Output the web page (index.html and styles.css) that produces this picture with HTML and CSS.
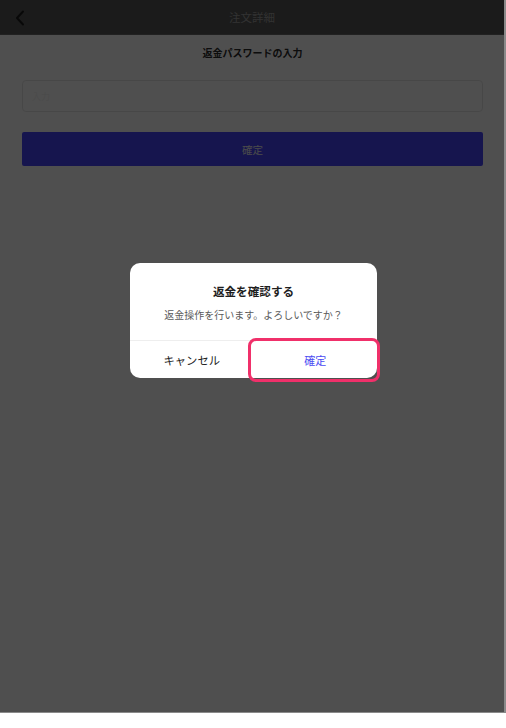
FILE: index.html
```html
<!DOCTYPE html>
<html lang="ja">
<head>
<meta charset="utf-8">
<title>注文詳細</title>
<link rel="stylesheet" href="styles.css">
</head>
<body>
<div class="screen">
  <header class="topbar">
    <span class="back">
      <svg width="10" height="16" viewBox="0 0 10 16"><path d="M8 1.5 L2 8 L8 14.5" fill="none" stroke="#1c1c1c" stroke-width="2" stroke-linecap="round" stroke-linejoin="round"/></svg>
    </span>
    <h1 class="title">注文詳細</h1>
  </header>
  <main class="content">
    <h2 class="section-title">返金パスワードの入力</h2>
    <div class="field"><span class="placeholder">入力</span></div>
    <button class="submit">確定</button>
  </main>
  <div class="mask"></div>
  <div class="dialog-wrap">
    <div class="dialog">
      <div class="dialog-body">
        <div class="dialog-title">返金を確認する</div>
        <div class="dialog-msg">返金操作を行います。よろしいですか？</div>
      </div>
      <div class="dialog-actions">
        <div class="action cancel">キャンセル</div>
        <div class="action ok"><span class="highlight"></span>確定</div>
      </div>
    </div>
  </div>
</div>
</body>
</html>
```
FILE: styles.css
```css
* { box-sizing: border-box; margin: 0; padding: 0; }
html, body { background: #ffffff; }
body {
  font-family: "Noto Sans CJK JP", "Noto Sans", sans-serif;
  width: 506px;
  height: 728px;
  overflow: hidden;
}
.screen {
  position: relative;
  width: 506px;
  height: 713px;
  background: #ffffff;
  border-right: 2px solid #8a8a8a;
  border-bottom: 1px solid #8a8a8a;
  overflow: hidden;
}
.topbar {
  position: relative;
  height: 35px;
  background: #575757;
  border-bottom: 1px solid #6a6a6a;
  display: flex;
  align-items: center;
  justify-content: center;
}
.back {
  position: absolute;
  left: 15px;
  top: 10px;
  display: flex;
}
.title {
  font-size: 11.5px;
  font-weight: 400;
  color: #a0a0a0;
  letter-spacing: 0;
}
.content {
  padding: 10px 21px 0 22px;
  display: flex;
  flex-direction: column;
}
.section-title {
  text-align: center;
  font-size: 10px;
  font-weight: 700;
  color: #2a2a2a;
  line-height: 16px;
}
.field {
  margin-top: 19px;
  height: 32px;
  border: 1px solid #e6e6e6;
  border-radius: 4px;
  display: flex;
  align-items: center;
  padding-left: 9px;
}
.placeholder {
  font-size: 9px;
  color: #f2f2f2;
}
.submit {
  margin-top: 20px;
  height: 34px;
  border: none;
  border-radius: 2px;
  background: #4844fb;
  color: #f0f0f0;
  font-family: inherit;
  font-size: 10.5px;
  width: 100%;
}
.mask {
  position: absolute;
  inset: 0;
  background: rgba(0, 0, 0, 0.69);
}
.dialog-wrap {
  position: absolute;
  left: 130px;
  top: 263px;
}
.dialog {
  width: 247px;
  background: #ffffff;
  border-radius: 10px;
}
.dialog-body {
  padding: 20px 0 18px;
  text-align: center;
  border-bottom: 1px solid #eeeeee;
}
.dialog-title {
  font-size: 11.6px;
  font-weight: 700;
  color: #1e1e1e;
  line-height: 17px;
}
.dialog-msg {
  margin-top: 8px;
  font-size: 10px;
  color: #5a5a5a;
  line-height: 14px;
}
.dialog-actions {
  display: flex;
  height: 37px;
}
.action {
  flex: 1;
  display: flex;
  align-items: center;
  justify-content: center;
  font-size: 11.3px;
  position: relative;
}
.cancel { color: #222222; }
.ok { color: #4b4bf2; font-size: 11px; }
.highlight {
  position: absolute;
  left: -6px;
  top: -3px;
  right: -3px;
  bottom: -4px;
  border: 3px solid #f0306a;
  border-radius: 8px;
}
```
